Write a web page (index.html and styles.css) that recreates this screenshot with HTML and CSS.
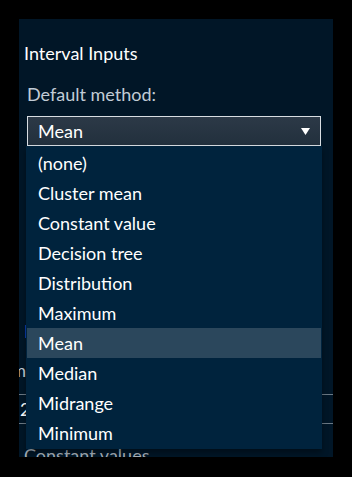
FILE: index.html
```html
<!DOCTYPE html>
<html>
<head>
<meta charset="utf-8">
<link rel="stylesheet" href="styles.css">
</head>
<body>
<div class="panel">
  <div class="title">Interval Inputs</div>
  <div class="label">Default method:</div>
  <div class="field">
    <div class="select">
      <span class="select-value">Mean</span>
      <svg class="caret" width="9" height="7" viewBox="0 0 9 7"><path d="M0 0 H9 L4.5 7 Z" fill="#ffffff"/></svg>
    </div>
    <ul class="menu">
      <li class="opt">(none)</li>
      <li class="opt">Cluster mean</li>
      <li class="opt">Constant value</li>
      <li class="opt">Decision tree</li>
      <li class="opt">Distribution</li>
      <li class="opt">Maximum</li>
      <li class="opt selected">Mean</li>
      <li class="opt">Median</li>
      <li class="opt">Midrange</li>
      <li class="opt">Minimum</li>
    </ul>
  </div>
  <div class="behind">
    <div class="sub-title">Imputation</div>
    <div class="col-head">Column name</div>
    <div class="row">2</div>
    <div class="foot">Constant values</div>
  </div>
</div>
</body>
</html>
```
FILE: styles.css
```css
html, body {
  margin: 0;
  padding: 0;
  background: #000000;
}
body {
  padding: 19px;
  font-family: Lato, "Open Sans", sans-serif;
}
.panel {
  width: 314px;
  height: 438px;
  background: #011627;
  overflow: hidden;
  box-sizing: border-box;
  padding: 23px 0 0 0;
}
.title {
  color: #ffffff;
  font-size: 18px;
  line-height: 22px;
  padding-left: 5px;
}
.label {
  color: #c2ccd6;
  font-size: 18px;
  line-height: 22px;
  margin-top: 19px;
  padding-left: 8px;
}
.field {
  position: relative;
  margin: 11px 12px 0 8px;
}
.select {
  height: 30px;
  box-sizing: border-box;
  border: 1px solid #d8dde2;
  background: linear-gradient(#2c3947, #22303d);
  display: flex;
  align-items: center;
  justify-content: space-between;
  padding: 0 10px 0 10px;
  color: #ffffff;
  font-size: 18px;
}
.caret {
  display: block;
}
.menu {
  position: absolute;
  left: -1px;
  right: -1px;
  top: 30px;
  margin: 0;
  padding: 2px 1px 1px 1px;
  list-style: none;
  background: #00233d;
  box-shadow: 0 4px 6px rgba(0, 0, 0, 0.35);
  z-index: 2;
}
.opt {
  height: 30px;
  line-height: 30px;
  padding-left: 11px;
  color: #ffffff;
  font-size: 18px;
}
.opt.selected {
  background: #2b475c;
}
.behind {
  padding-top: 174px;
}
.sub-title {
  color: #4a78d8;
  font-size: 18px;
  padding-left: 5px;
  line-height: 22px;
}
.col-head {
  color: #c2ccd6;
  font-size: 18px;
  line-height: 22px;
  margin-top: 17px;
  margin-left: -44px;
}
.row {
  border-top: 1px solid #6a7884;
  border-bottom: 1px solid #6a7884;
  height: 28px;
  line-height: 28px;
  margin-top: 13px;
  color: #ffffff;
  font-size: 18px;
  padding-left: 1px;
}
.foot {
  color: #aab4be;
  font-size: 18px;
  line-height: 22px;
  margin-top: 20px;
  padding-left: 5px;
}
```
